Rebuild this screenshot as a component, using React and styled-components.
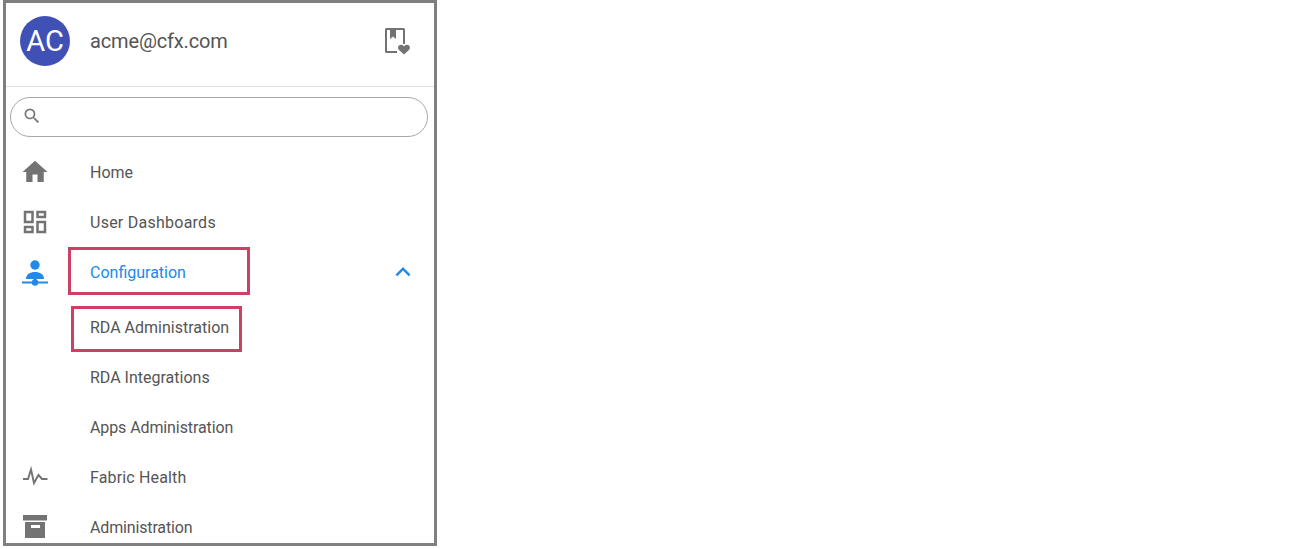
import React from "react";
import styled, { createGlobalStyle } from "styled-components";

const Global = createGlobalStyle`
  html, body { margin: 0; padding: 0; background: #fff; overflow: hidden; }
  body { font-family: Roboto, "Liberation Sans", sans-serif; }
`;

const Frame = styled.div`
  box-sizing: border-box;
  width: 434px;
  height: 546px;
  margin-left: 3px;
  border: 3px solid #808080;
  overflow: hidden;
  background: #fff;
`;

const Header = styled.header`
  box-sizing: border-box;
  height: 84px;
  display: flex;
  align-items: center;
  padding: 0 21px 8px 14px;
  border-bottom: 1px solid #e0e0e0;
`;

const Avatar = styled.div`
  width: 50px;
  height: 50px;
  border-radius: 50%;
  background: #3f51b5;
  color: #fff;
  font-size: 29px;
  display: flex;
  align-items: center;
  justify-content: center;
  flex: none;
`;

const Email = styled.div`
  margin-left: 20px;
  flex: 1;
  font-size: 20px;
  letter-spacing: -0.15px;
  color: #555;
`;

const SearchWrap = styled.div`
  padding: 10px 6px 0 4px;
`;

const Search = styled.div`
  box-sizing: border-box;
  height: 40px;
  border: 1px solid #a8a8a8;
  border-radius: 20px;
  display: flex;
  align-items: center;
  padding: 0 0 2px 11px;
`;

const Nav = styled.nav`
  padding-top: 10px;
`;

const Row = styled.div`
  position: relative;
  height: 50px;
  display: flex;
  align-items: center;
  padding-left: 14px;
  padding-right: 16px;
  color: ${(p) => (p.$active ? "#2189e8" : "#555")};
  font-size: 16px;
`;

const IconSlot = styled.div`
  width: 30px;
  height: 30px;
  margin-right: 40px;
  display: flex;
  align-items: center;
  justify-content: center;
  flex: none;
  color: ${(p) => (p.$active ? "#2189e8" : "#737373")};
`;

const Label = styled.span`
  flex: 1;
  letter-spacing: ${(p) => p.$track ?? 0}px;
`;

const SubList = styled.div`
  padding-top: 5px;
`;

const SubRow = styled(Row)`
  padding-left: 84px;
`;

const Highlight = styled.div`
  position: absolute;
  box-sizing: border-box;
  border: 3px solid #cc4065;
  pointer-events: none;
  left: ${(p) => p.$left}px;
  top: ${(p) => p.$top}px;
  width: ${(p) => p.$width}px;
  height: ${(p) => p.$height}px;
`;

const Svg = ({ children, size = 24 }) => (
  <svg width={size} height={size} viewBox="0 0 24 24" fill="currentColor">{children}</svg>
);

const HomeIcon = () => (
  <Svg size={30}><path d="M10 20v-6h4v6h5v-8h3L12 3 2 12h3v8z" /></Svg>
);
const DashIcon = () => (
  <Svg size={30}><path d="M19 5v2h-4V5h4M9 5v6H5V5h4m10 8v6h-4v-6h4M9 17v2H5v-2h4M21 3h-8v6h8V3zM11 3H3v10h8V3zm10 8h-8v10h8V11zm-10 4H3v6h8v-6z" /></Svg>
);
const ConfigIcon = () => (
  <svg width="30" height="30" viewBox="0 0 30 30" fill="currentColor">
    <circle cx="15" cy="8" r="4.7" />
    <path d="M6 22c0-4.500 4-7 9-7s9 2.500 9 7z" />
    <rect x="2" y="24.500" width="26" height="2" />
    <rect x="13.500" y="21" width="3" height="4" />
    <circle cx="15" cy="25.500" r="3.200" />
  </svg>
);
const PulseIcon = () => (
  <svg width="30" height="30" viewBox="0 0 30 30" fill="none" stroke="currentColor" strokeWidth="1.9">
    <path d="M3 17h5l3-9.500 3 13.500 4.500-8 3.500 4h5.500" />
  </svg>
);
const ArchiveIcon = () => (
  <svg width="30" height="30" viewBox="0 0 30 30" fill="currentColor">
    <path fillRule="evenodd" d="M3 3h24v5.500H3zM5 10h20v16H5zM11 13v3h9v-3z" />
  </svg>
);
const SearchIcon = () => (
  <svg width="20" height="20" viewBox="0 0 24 24" fill="#757575">
    <path d="M15.5 14h-.79l-.28-.27A6.470 6.470 0 0 0 16 9.500 6.500 6.500 0 1 0 9.500 16c1.610 0 3.090-.59 4.230-1.570l.27.28v.79l5 4.990L20.490 19l-4.990-5zm-6 0C7.010 14 5 11.990 5 9.500S7.010 5 9.500 5 14 7.010 14 9.500 11.990 14 9.500 14z" />
  </svg>
);
const BookmarkHeart = () => (
  <svg width="30" height="30" viewBox="0 0 30 30" fill="#737373">
    <path fillRule="evenodd" d="M3.500 2h17A1.500 1.500 0 0 1 22 3.500V18h-2V4h-7v9l-3-2.500L7 13V4H4v21h10v2H3.500A1.500 1.500 0 0 1 2 25.500v-22A1.500 1.500 0 0 1 3.500 2z" />
    <path d="M21 28.500l-5-4.600c-1.900-1.900-.7-5.100 2.200-5.100 1.100 0 2.200.6 2.800 1.600.6-1 1.700-1.600 2.800-1.600 2.900 0 4.100 3.200 2.200 5.100z" />
  </svg>
);
const Chevron = () => (
  <svg width="30" height="30" viewBox="0 0 24 24" fill="currentColor">
    <path d="M12 8l-6 6 1.410 1.410L12 10.830l4.590 4.580L18 14z" />
  </svg>
);

export default function App() {
  return (
    <>
      <Global />
      <Frame>
        <Header>
          <Avatar>AC</Avatar>
          <Email>acme@cfx.com</Email>
          <BookmarkHeart />
        </Header>
        <SearchWrap>
          <Search><SearchIcon /></Search>
        </SearchWrap>
        <Nav>
          <Row><IconSlot><HomeIcon /></IconSlot><Label>Home</Label></Row>
          <Row><IconSlot><DashIcon /></IconSlot><Label $track={0.25}>User Dashboards</Label></Row>
          <Row $active>
            <IconSlot $active><ConfigIcon /></IconSlot>
            <Label>Configuration</Label>
            <Chevron />
            <Highlight $left={62} $top={0} $width={182} $height={48} />
          </Row>
          <SubList>
            <SubRow>
              <Label>RDA Administration</Label>
              <Highlight $left={65} $top={4} $width={171} $height={46} />
            </SubRow>
            <SubRow><Label>RDA Integrations</Label></SubRow>
            <SubRow><Label $track={-0.1}>Apps Administration</Label></SubRow>
          </SubList>
          <Row><IconSlot><PulseIcon /></IconSlot><Label $track={0.15}>Fabric Health</Label></Row>
          <Row><IconSlot><ArchiveIcon /></IconSlot><Label $track={-0.15}>Administration</Label></Row>
        </Nav>
      </Frame>
    </>
  );
}
